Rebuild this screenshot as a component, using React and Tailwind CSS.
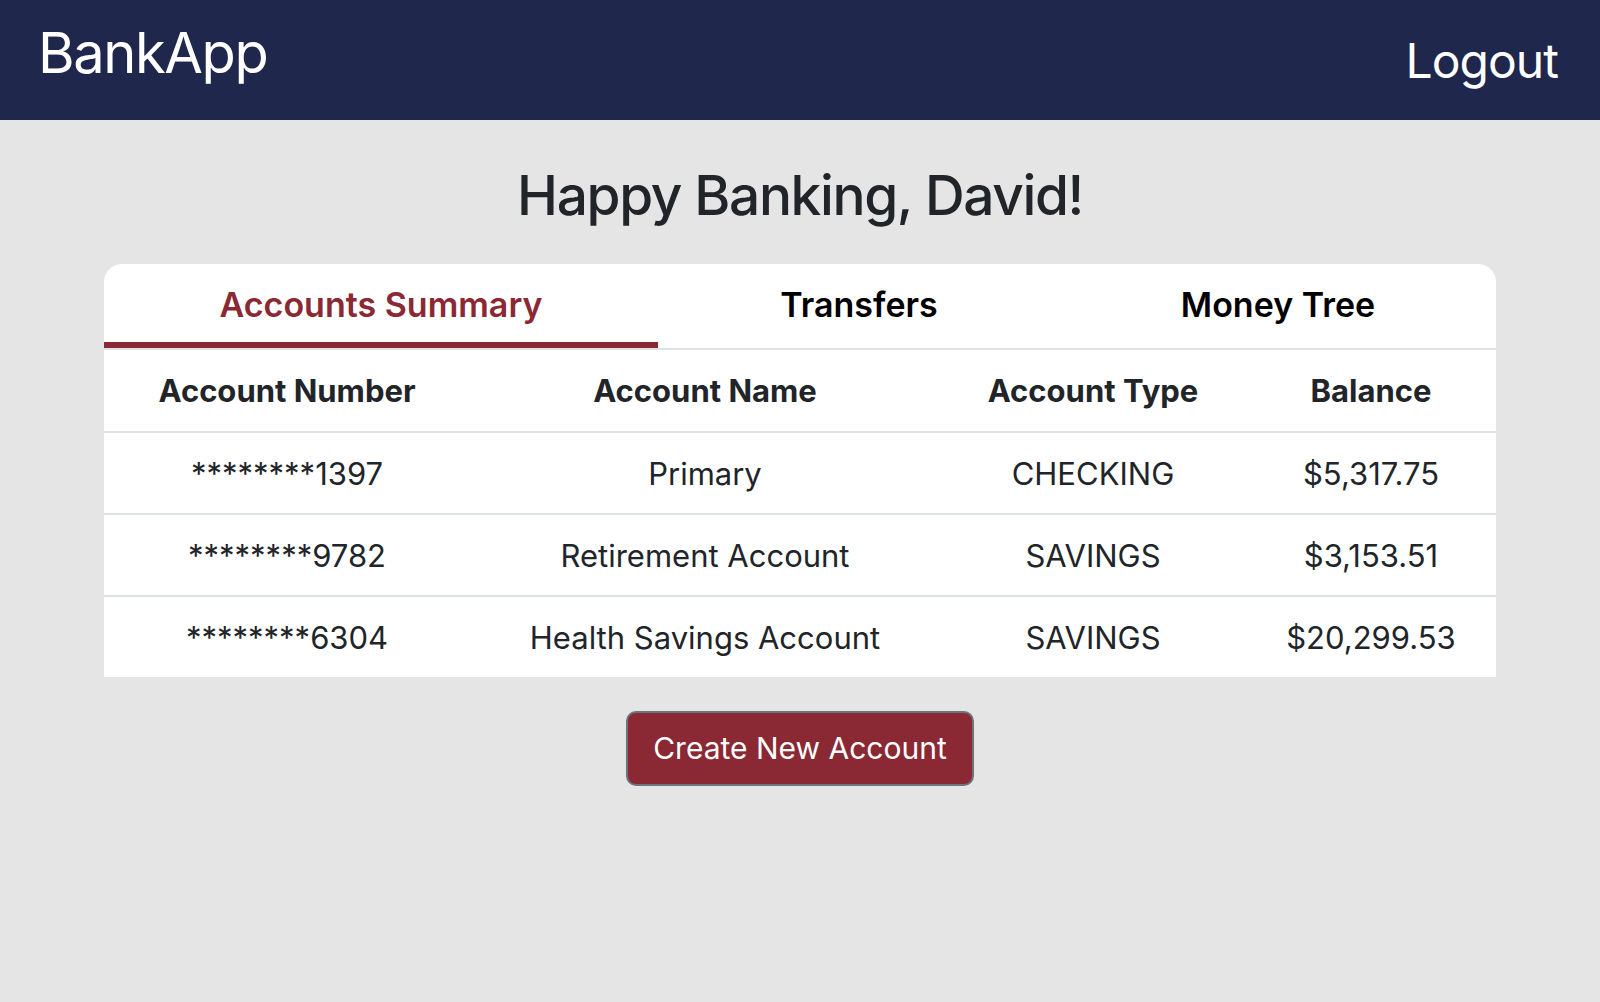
import { useState } from 'react';

const accounts = [
  { number: '********1397', name: 'Primary', type: 'CHECKING', balance: '$5,317.75' },
  { number: '********9782', name: 'Retirement Account', type: 'SAVINGS', balance: '$3,153.51' },
  { number: '********6304', name: 'Health Savings Account', type: 'SAVINGS', balance: '$20,299.53' },
];

const tabs = ['Accounts Summary', 'Transfers', 'Money Tree'];

export default function App() {
  const [activeTab, setActiveTab] = useState('Accounts Summary');

  return (
    <div className="min-h-screen bg-[#e5e5e5] font-['Inter',sans-serif]">
      {/* Navbar */}
      <header className="h-[120px] bg-[#1f274c] flex items-start justify-between pl-[38px] pr-[42px] text-white">
        <div className="pt-[25px] text-[56px] leading-none tracking-tight">BankApp</div>
        <button className="pt-[37px] text-[48px] leading-none tracking-[-0.02em]">Logout</button>
      </header>

      <h1 className="mt-[48px] text-center text-[55px] font-medium leading-none tracking-tight text-[#212529]">
        Happy Banking, David!
      </h1>

      {/* Card */}
      <div className="mt-[41px] w-[1392px] mx-auto bg-white rounded-t-[18px]">
        <div className="grid grid-cols-[554px_402px_1fr] h-[86px] border-b-2 border-[#dee2e6]">
          {tabs.map(tab => (
            <button key={tab} onClick={() => setActiveTab(tab)}
              className={`flex items-center justify-center pt-1 border-b-[6px] text-[34px] font-semibold leading-none ${activeTab === tab ? 'border-[#8a2833] text-[#8a2833]' : 'border-transparent text-black'}`}>
              {tab}
            </button>
          ))}
        </div>

        <div className="grid grid-cols-[366px_470px_306px_250px] text-[#212529]">
          {['Account Number', 'Account Name', 'Account Type', 'Balance'].map(h => (
            <div key={h} className="h-[83px] flex items-center justify-center pt-[2px] border-b-2 border-[#dee2e6] text-[31px] font-bold">
              {h}
            </div>
          ))}
          {accounts.map((a, i) => {
            const cls = `flex items-center justify-center pt-[3px] text-[31px] ${i < accounts.length - 1 ? 'h-[82px] border-b-2 border-[#dee2e6]' : 'h-[80px]'}`;
            return [a.number, a.name, a.type, a.balance].map((v, j) => (
              <div key={`${i}-${j}`} className={cls}>{v}</div>
            ));
          })}
        </div>
      </div>

      <div className="flex justify-center mt-[34px]">
        <button className="h-[75px] px-[25px] flex items-center border-2 border-[#6c757d] bg-[#8a2833] rounded-[10px] text-white text-[30px]">
          Create New Account
        </button>
      </div>
    </div>
  );
}
